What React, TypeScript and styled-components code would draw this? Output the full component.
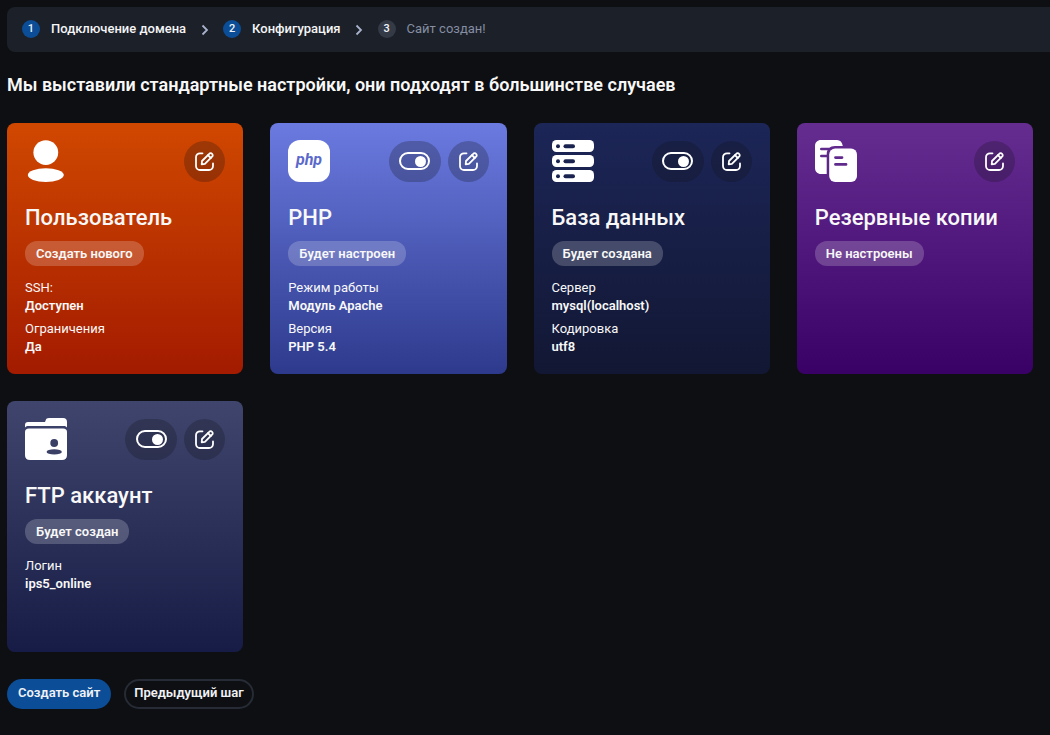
import React from "react";
import styled, { createGlobalStyle } from "styled-components";

const GlobalStyle = createGlobalStyle`
  *, *::before, *::after { box-sizing: border-box; }
  body {
    margin: 0;
    background: #0e0f13;
    color: #f8f8f8;
    font-family: Roboto, "Liberation Sans", sans-serif;
    font-size: 13px;
    line-height: 18px;
  }
`;

const Page = styled.div`
  display: flex;
  flex-direction: column;
  padding: 7px 0 26px 7px;
`;

const Stepper = styled.nav`
  background: #1c2028;
  border-radius: 8px 0 0 8px;
`;

const StepList = styled.ol`
  display: flex;
  align-items: center;
  height: 45px;
  margin: 0;
  padding: 0 15px 2px;
  list-style: none;
`;

const Step = styled.li<{ $active: boolean }>`
  display: flex;
  align-items: center;
  gap: 11px;
  font-weight: ${(p) => (p.$active ? 500 : 400)};
  color: ${(p) => (p.$active ? "#f4f5f7" : "#858ea2")};
`;

const StepNumber = styled.span<{ $active: boolean }>`
  width: 18px;
  height: 18px;
  border-radius: 50%;
  background: ${(p) => (p.$active ? "#0b4d96" : "#343a46")};
  color: #f0f2f6;
  font-size: 11px;
  font-weight: 500;
  text-align: center;
`;

const Separator = styled.li`
  display: flex;
  justify-content: center;
  width: 37px;
  padding-top: 3px;
`;

const Main = styled.main`
  padding-right: 17px;
`;

const Heading = styled.h1`
  margin: 20px 0 25px;
  font-size: 18px;
  line-height: 26px;
  font-weight: 600;
`;

const Grid = styled.div`
  display: grid;
  grid-template-columns: repeat(auto-fill, minmax(230px, 1fr));
  grid-auto-rows: minmax(251px, auto);
  gap: 27px;
`;

const Card = styled.section<{ $from: string; $to: string }>`
  padding: 17px 18px;
  border-radius: 8px;
  background: linear-gradient(${(p) => p.$from}, ${(p) => p.$to});
`;

const CardTop = styled.div`
  display: flex;
  justify-content: space-between;
  align-items: center;
`;

const CardIcon = styled.svg`
  display: block;
  width: 42px;
  height: 42px;
`;

const Actions = styled.div`
  display: flex;
  gap: 7px;
`;

const EditButton = styled.button`
  display: grid;
  place-items: center;
  width: 41px;
  height: 41px;
  padding: 0;
  border: 0;
  border-radius: 21px;
  background: rgba(14, 15, 19, 0.25);
  color: #fff;
  cursor: pointer;
`;

const SwitchLabel = styled.label`
  display: grid;
  place-items: center;
  width: 52px;
  height: 41px;
  border-radius: 21px;
  background: rgba(14, 15, 19, 0.25);
  cursor: pointer;
`;

const SwitchInput = styled.input`
  appearance: none;
  display: flex;
  align-items: center;
  width: 31px;
  height: 18px;
  margin: 0;
  padding: 0 2px;
  border: 2px solid #fff;
  border-radius: 9px;
  cursor: pointer;

  &::before {
    content: "";
    width: 11px;
    height: 11px;
    border-radius: 50%;
    background: #fff;
  }

  &:checked {
    justify-content: flex-end;
  }
`;

const CardTitle = styled.h2`
  margin: 22px 0 10px;
  font-size: 22px;
  line-height: 27px;
  font-weight: 500;
`;

const Badge = styled.span`
  display: block;
  width: fit-content;
  padding: 0 11px;
  border-radius: 12px;
  background: rgba(255, 255, 255, 0.2);
  line-height: 25px;
  font-weight: 600;
`;

const Details = styled.dl`
  display: flex;
  flex-direction: column;
  gap: 5px;
  margin: 13px 0 0;
`;

const Term = styled.dt`
  font-weight: 400;
`;

const Value = styled.dd`
  margin: 0;
  font-weight: 600;
`;

const Footer = styled.div`
  display: flex;
  gap: 13px;
  margin-top: 27px;
`;

const Button = styled.button<{ $primary?: boolean }>`
  height: 30px;
  padding: 0 ${(p) => (p.$primary ? 11 : 8)}px 2px;
  border: ${(p) => (p.$primary ? "0" : "2px solid #262b35")};
  border-radius: 15px;
  background: ${(p) => (p.$primary ? "#0b4d96" : "transparent")};
  color: #f0f2f6;
  font: 600 13px/18px Roboto, "Liberation Sans", sans-serif;
  cursor: pointer;
`;

const PhpText = styled.text`
  font: italic 700 16px Roboto, "Liberation Sans", sans-serif;
  fill: #5b69cb;
`;

const UserIcon = () => (
  <CardIcon viewBox="0 0 42 42" fill="#fff" aria-hidden="true">
    <circle cx="20.8" cy="12.6" r="12.4" />
    <ellipse cx="20.8" cy="35.1" rx="18" ry="6.8" />
  </CardIcon>
);

const PhpIcon = () => (
  <CardIcon viewBox="0 0 42 42" aria-hidden="true">
    <rect width="42" height="42" rx="12" fill="#fff" />
    <PhpText x="21" y="25" textAnchor="middle">php</PhpText>
  </CardIcon>
);

const DatabaseIcon = () => (
  <CardIcon viewBox="0 0 42 42" aria-hidden="true">
    {[0, 15, 30].map((y) => (
      <g key={y}>
        <rect y={y} width="42" height="12" rx="4.5" fill="#fff" />
        <circle cx="6" cy={y + 6.2} r="2" fill="#1a2350" />
        <rect x="11.5" y={y + 4.2} width="11.5" height="4" rx="2" fill="#1a2350" />
      </g>
    ))}
  </CardIcon>
);

const BackupIcon = () => (
  <CardIcon viewBox="0 0 42 42" fill="none" aria-hidden="true">
    <path fill="#fff" d="M6 0h16c3.200 0 5.200 2 5.800 6H20c-5 0-8.300 3.300-8.300 8v20H6c-3.500 0-6-2.500-6-6V6c0-3.500 2.500-6 6-6Z" />
    <path stroke="#5f2a8c" strokeWidth="2.600" strokeLinecap="round" d="M6.300 9h8M6.300 16h6" />
    <rect x="14.200" y="8.600" width="27.800" height="33.400" rx="6" fill="#fff" />
    <path stroke="#5f2a8c" strokeWidth="2.800" strokeLinecap="round" d="M20.500 17.600h6.500M20.500 24.400h10.500" />
  </CardIcon>
);

const FtpIcon = () => (
  <CardIcon viewBox="0 0 42 42" aria-hidden="true">
    <path fill="#fff" d="M0 9.500V7c0-2 1-3 3-3h17l.6-1.600C21.200.800 22 0 24 0h14c2.700 0 4 1.400 4 4v5.500C41 8.300 40 8 38.500 8h-35C2 8 1 8.300 0 9.500Z" />
    <path fill="#fff" d="M4 10.500h34c2.700 0 4 1.200 4 3.600V37c0 3.300-1.700 5-5 5H5c-3.300 0-5-1.700-5-5V14.100c0-2.400 1.300-3.600 4-3.600Z" />
    <circle cx="29.200" cy="25" r="3.900" fill="#3a3f66" />
    <ellipse cx="29.200" cy="33.900" rx="7.600" ry="2.700" fill="#3a3f66" />
  </CardIcon>
);

const EditIcon = () => (
  <svg width="19" height="19" viewBox="0 0 19 19" fill="none" stroke="currentColor" strokeWidth="1.800" strokeLinecap="round" strokeLinejoin="round" aria-hidden="true">
    <path d="M7.500 1.300H5a4 4 0 0 0-4 4v8.700a4 4 0 0 0 4 4h9a4 4 0 0 0 4-4v-2.500" />
    <path d="m7 9 7.200-7.200a2 2 0 0 1 2.900 0 2 2 0 0 1 0 2.900L9.900 11.900l-3.200.4Z" />
    <path d="m13 3.200 2.800 2.800" />
  </svg>
);

type Item = {
  title: string;
  status: string;
  from: string;
  to: string;
  toggle?: boolean;
  icon: React.ReactNode;
  details: [string, string][];
};

const items: Item[] = [
  {
    title: "Пользователь",
    status: "Создать нового",
    from: "#d04800",
    to: "#a31b00",
    icon: <UserIcon />,
    details: [["SSH:", "Доступен"], ["Ограничения", "Да"]],
  },
  {
    title: "PHP",
    status: "Будет настроен",
    from: "#6b7ae0",
    to: "#2d3a8c",
    toggle: true,
    icon: <PhpIcon />,
    details: [["Режим работы", "Модуль Apache"], ["Версия", "PHP 5.4"]],
  },
  {
    title: "База данных",
    status: "Будет создана",
    from: "#1c2657",
    to: "#121733",
    toggle: true,
    icon: <DatabaseIcon />,
    details: [["Сервер", "mysql(localhost)"], ["Кодировка", "utf8"]],
  },
  {
    title: "Резервные копии",
    status: "Не настроены",
    from: "#662d91",
    to: "#390066",
    icon: <BackupIcon />,
    details: [],
  },
  {
    title: "FTP аккаунт",
    status: "Будет создан",
    from: "#40456d",
    to: "#171c46",
    toggle: true,
    icon: <FtpIcon />,
    details: [["Логин", "ips5_online"]],
  },
];

const steps = ["Подключение домена", "Конфигурация", "Сайт создан!"];
const currentStep = 1;

export default function App() {
  return (
    <>
      <GlobalStyle />
      <Page>
        <Stepper aria-label="Шаги">
          <StepList>
            {steps.map((label, i) => (
              <React.Fragment key={label}>
                {i > 0 && (
                  <Separator aria-hidden="true">
                    <svg width="8" height="12" viewBox="0 0 8 12" fill="none" stroke="#a9b2cc" strokeWidth="1.800">
                      <path d="m1.500 1.500 4.500 4.500-4.500 4.500" />
                    </svg>
                  </Separator>
                )}
                <Step $active={i <= currentStep} aria-current={i === currentStep ? "step" : undefined}>
                  <StepNumber $active={i <= currentStep}>{i + 1}</StepNumber>
                  {label}
                </Step>
              </React.Fragment>
            ))}
          </StepList>
        </Stepper>
        <Main>
          <Heading>Мы выставили стандартные настройки, они подходят в большинстве случаев</Heading>
          <Grid>
            {items.map((item) => (
              <Card key={item.title} $from={item.from} $to={item.to}>
                <CardTop>
                  {item.icon}
                  <Actions>
                    {item.toggle && (
                      <SwitchLabel>
                        <SwitchInput type="checkbox" role="switch" defaultChecked aria-label={item.title} />
                      </SwitchLabel>
                    )}
                    <EditButton type="button" aria-label={`Изменить: ${item.title}`}>
                      <EditIcon />
                    </EditButton>
                  </Actions>
                </CardTop>
                <CardTitle>{item.title}</CardTitle>
                <Badge>{item.status}</Badge>
                {item.details.length > 0 && (
                  <Details>
                    {item.details.map(([term, value]) => (
                      <div key={term}>
                        <Term>{term}</Term>
                        <Value>{value}</Value>
                      </div>
                    ))}
                  </Details>
                )}
              </Card>
            ))}
          </Grid>
          <Footer>
            <Button type="button" $primary>Создать сайт</Button>
            <Button type="button">Предыдущий шаг</Button>
          </Footer>
        </Main>
      </Page>
    </>
  );
}
